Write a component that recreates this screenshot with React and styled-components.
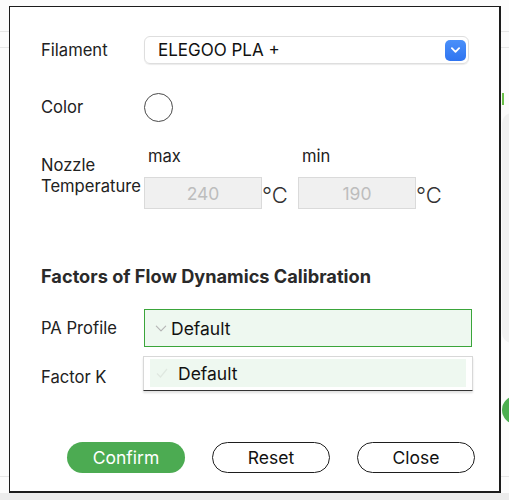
import React from "react";
import styled, { createGlobalStyle } from "styled-components";

const Global = createGlobalStyle`
  html, body { margin: 0; padding: 0; }
  body {
    font-family: Inter, "Liberation Sans", sans-serif;
    background: #fbfbfb;
    color: #222;
  }
`;

const Page = styled.div`
  position: relative;
  width: 509px;
  height: 500px;
  overflow: hidden;
  background: #fcfcfc;
  display: flex;
  flex-direction: column;
`;

const BackLine = styled.div`
  position: absolute;
  left: 0;
  right: 0;
  top: ${(p) => p.$top}px;
  height: 1px;
  background: #e6e6e6;
`;

const BackPanel = styled.div`
  position: absolute;
  left: 502px;
  top: 113px;
  width: 30px;
  height: 230px;
  border-radius: 10px 0 0 10px;
  background: #f1f1f1;
`;

const GreenTick = styled.div`
  position: absolute;
  left: 502px;
  top: 93px;
  width: 2px;
  height: 12px;
  background: #6bc04a;
`;

const GreenKnob = styled.div`
  position: absolute;
  left: 502px;
  top: 396px;
  width: 28px;
  height: 28px;
  border-radius: 50%;
  background: #4caf50;
`;

const BottomBand = styled.div`
  position: absolute;
  left: 0;
  right: 0;
  bottom: 0;
  height: 7px;
  background: #ececec;
`;

const Dialog = styled.div`
  position: relative;
  z-index: 1;
  margin: 6px 0 0 9px;
  width: 492px;
  height: 487px;
  box-sizing: border-box;
  background: #fff;
  border: 1px solid #1c1c1c;
  border-right-width: 2px;
  border-bottom-width: 2px;
  display: flex;
  flex-direction: column;
  padding: 0 0 0 31px;
`;

const Row = styled.div`
  display: flex;
  align-items: ${(p) => p.$align || "center"};
  margin-top: ${(p) => p.$mt || 0}px;
`;

const Label = styled.div`
  width: 103px;
  flex: none;
  font-size: 16.6px;
  line-height: 21px;
  color: #222;
  padding-top: ${(p) => p.$pt || 0}px;
`;

const Select = styled.div`
  width: 325px;
  height: 28px;
  box-sizing: border-box;
  border: 1px solid #dedede;
  border-radius: 6px;
  box-shadow: 0 1px 1px rgba(0, 0, 0, 0.08);
  display: flex;
  align-items: center;
  padding: 0 2px 0 13px;
  font-size: 17px;
  color: #111;
`;

const SelectText = styled.span`
  flex: 1;
`;

const BlueButton = styled.span`
  width: 21px;
  height: 21px;
  border-radius: 5px;
  background: linear-gradient(#4a90fa, #2f74f0);
  display: flex;
  align-items: center;
  justify-content: center;
`;

const Swatch = styled.div`
  width: 29px;
  height: 29px;
  box-sizing: border-box;
  border-radius: 50%;
  border: 1.5px solid #4a4a4a;
  background: #fff;
`;

const TempGroup = styled.div`
  display: flex;
  gap: 13px;
`;

const TempCol = styled.div`
  display: flex;
  flex-direction: column;
`;

const TempCaption = styled.div`
  font-size: 16.6px;
  line-height: 20px;
  padding-left: 4px;
  margin-bottom: 11px;
  color: #222;
`;

const TempLine = styled.div`
  display: flex;
  align-items: center;
`;

const TempBox = styled.div`
  width: 118px;
  height: 32px;
  box-sizing: border-box;
  border: 1px solid #dadada;
  background: #f0f0f0;
  color: #bdbdbd;
  font-size: 17.5px;
  display: flex;
  align-items: center;
  justify-content: center;
`;

const Unit = styled.span`
  width: 23px;
  font-size: 22px;
  font-weight: 300;
  color: #333;
  line-height: 1;
  margin-top: 3px;
`;

const Heading = styled.div`
  margin-top: 57px;
  font-size: 18.2px;
  line-height: 21px;
  font-weight: 700;
  color: #2a2a2a;
`;

const ComboWrap = styled.div`
  position: relative;
`;

const Combo = styled.div`
  width: 328px;
  height: 38px;
  box-sizing: border-box;
  border: 1px solid #3aa53a;
  background: #eef8f0;
  display: flex;
  align-items: center;
  padding-left: 10px;
  gap: 4px;
  font-size: 17.5px;
  color: #111;
`;

const Popup = styled.div`
  position: absolute;
  left: -1px;
  top: calc(100% + 9px);
  width: 330px;
  height: 35px;
  box-sizing: border-box;
  background: #fff;
  border: 1px solid #d8d8d8;
  border-bottom: 1.5px solid #333;
  box-shadow: 0 2px 2px rgba(0, 0, 0, 0.12);
  padding: 2px 6px 3px 6px;
  z-index: 2;
`;

const Option = styled.div`
  height: 100%;
  background: #eef8f0;
  display: flex;
  align-items: center;
  padding-left: 6px;
  gap: 10px;
  font-size: 17.5px;
  color: #111;
`;

const Footer = styled.div`
  margin-top: auto;
  margin-bottom: 18px;
  display: flex;
  justify-content: flex-end;
  gap: 27px;
  padding-right: 24px;
`;

const Button = styled.button`
  width: 118px;
  height: 31px;
  box-sizing: border-box;
  border-radius: 16px;
  font-family: inherit;
  font-size: 17.5px;
  cursor: pointer;
  border: ${(p) => (p.$primary ? "none" : "1.5px solid #1e1e1e")};
  background: ${(p) => (p.$primary ? "#4cab52" : "#fff")};
  color: ${(p) => (p.$primary ? "#fff" : "#111")};
  padding: 0;
`;

const Chevron = ({ color = "#fff", w = 10, h = 6, sw = 2 }) => (
  <svg width={w} height={h} viewBox="0 0 10 6" fill="none">
    <path d="M1 1l4 4 4-4" stroke={color} strokeWidth={sw} strokeLinecap="round" strokeLinejoin="round" />
  </svg>
);

const Check = () => (
  <svg width="12" height="10" viewBox="0 0 12 10" fill="none">
    <path d="M1 5.5l3.5 3.5L11 1" stroke="#dfe8e0" strokeWidth="1.2" />
  </svg>
);

export default function App() {
  return (
    <Page>
      <Global />
      <BackLine $top={31} />
      <BackLine $top={47} />
      <BackLine $top={476} />
      <GreenTick />
      <BackPanel />
      <GreenKnob />
      <BottomBand />
      <Dialog>
        <Row $mt={29}>
          <Label>Filament</Label>
          <Select>
            <SelectText>ELEGOO PLA +</SelectText>
            <BlueButton>
              <Chevron w={9} h={6} sw={2} />
            </BlueButton>
          </Select>
        </Row>
        <Row $mt={29}>
          <Label>Color</Label>
          <Swatch />
        </Row>
        <Row $mt={24} $align="flex-start">
          <Label $pt={9}>
            Nozzle
            <br />
            Temperature
          </Label>
          <TempGroup>
            <TempCol>
              <TempCaption>max</TempCaption>
              <TempLine>
                <TempBox>240</TempBox>
                <Unit>℃</Unit>
              </TempLine>
            </TempCol>
            <TempCol>
              <TempCaption>min</TempCaption>
              <TempLine>
                <TempBox>190</TempBox>
                <Unit>℃</Unit>
              </TempLine>
            </TempCol>
          </TempGroup>
        </Row>
        <Heading>Factors of Flow Dynamics Calibration</Heading>
        <Row $mt={22}>
          <Label>PA Profile</Label>
          <ComboWrap>
            <Combo>
              <Chevron color="#b5b5b5" w={12} h={7} sw={1} />
              Default
            </Combo>
            <Popup>
              <Option>
                <Check />
                Default
              </Option>
            </Popup>
          </ComboWrap>
        </Row>
        <Row $mt={20}>
          <Label>Factor K</Label>
        </Row>
        <Footer>
          <Button $primary>Confirm</Button>
          <Button>Reset</Button>
          <Button>Close</Button>
        </Footer>
      </Dialog>
    </Page>
  );
}
